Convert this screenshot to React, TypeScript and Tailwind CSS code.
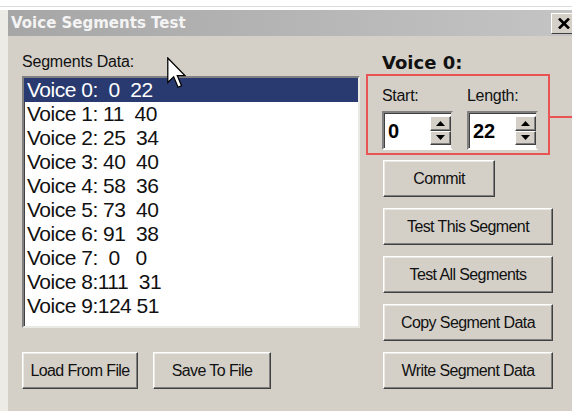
import React from "react";

const rows: string[] = [
  "Voice 0:  0  22",
  "Voice 1: 11  40",
  "Voice 2: 25  34",
  "Voice 3: 40  40",
  "Voice 4: 58  36",
  "Voice 5: 73  40",
  "Voice 6: 91  38",
  "Voice 7:  0   0",
  "Voice 8:111  31",
  "Voice 9:124 51",
];

const sans = { fontFamily: '"Liberation Sans", Arial, sans-serif' };
const dejavu = { fontFamily: '"DejaVu Sans", Verdana, sans-serif' };

function Button({ label, w }: { label: string; w: string }) {
  return (
    <button
      className={`${w} h-[37px] bg-[#d4d0c8] border border-t-white border-l-white border-b-[#404040] border-r-[#404040] shadow-[inset_-1px_-1px_0_#808080,inset_1px_1px_0_#ebe9e3] text-[16px] tracking-[-0.6px] text-[#111] flex items-center justify-center`}
      style={sans}
    >
      {label}
    </button>
  );
}

function SpinArrow({ up }: { up: boolean }) {
  return (
    <div className="flex-1 bg-[#d4d0c8] border border-t-white border-l-white border-b-[#404040] border-r-[#404040] shadow-[inset_-1px_-1px_0_#808080] flex items-center justify-center">
      <svg width="9" height="5" viewBox="0 0 9 5">
        {up ? <polygon points="0,5 9,5 4.5,0" fill="#000" /> : <polygon points="0,0 9,0 4.5,5" fill="#000" />}
      </svg>
    </div>
  );
}

function SpinBox({ value }: { value: string }) {
  return (
    <div className="w-[71px] h-[39px] bg-white border-2 border-t-[#808080] border-l-[#808080] border-b-white border-r-[#d4d0c8] shadow-[inset_1px_1px_0_#404040] flex items-center">
      <span className="flex-1 pl-[4px] text-[20px] font-bold text-black leading-none" style={sans}>
        {value}
      </span>
      <div className="w-[21px] h-[29px] flex flex-col self-center">
        <SpinArrow up />
        <SpinArrow up={false} />
      </div>
    </div>
  );
}

function Cursor() {
  return (
    <svg className="absolute left-[167px] top-[57px]" width="19" height="32" viewBox="0 0 12 20">
      <polygon
        points="0.5,0.5 0.5,16 4.2,12.4 7,19 9.2,18 6.5,11.6 11.3,11.6"
        fill="#fff"
        stroke="#000"
        strokeWidth="0.8"
        strokeLinejoin="miter"
      />
    </svg>
  );
}

export default function App() {
  return (
    <div className="w-[572px] h-[411px] overflow-hidden relative bg-[#ecebe6]">
      <div className="h-[10px] bg-white flex flex-col">
        <div className="h-[6px]" />
        <div className="h-[1px] bg-[#dcdcdc]" />
      </div>
      <div className="ml-[8px] w-[600px] h-[401px] flex flex-col bg-[#d4d0c8]">
        {/* title bar */}
        <div className="h-[26px] bg-gradient-to-r from-[#a6a6a6] to-[#c6c6c6] flex items-center relative">
          <span className="pl-[3px] text-[15px] font-bold text-[#f4f4f4]" style={dejavu}>
            Voice Segments Test
          </span>
          <div className="absolute left-[543px] top-[3px] w-[26px] h-[21px] bg-[#d4d0c8] border border-t-white border-l-white border-b-[#404040] border-r-[#404040] flex items-center justify-center">
            <svg width="12" height="11" viewBox="0 0 12 11">
              <path d="M1 0.5 L11 10.5 M11 0.5 L1 10.5" stroke="#000" strokeWidth="2.6" />
            </svg>
          </div>
        </div>

        {/* body */}
        <div className="flex pt-[15px] pl-[14px]">
          {/* left column */}
          <div className="w-[338px] flex flex-col">
            <div className="h-[22px] leading-[22px] text-[16px] tracking-[-0.2px] text-[#111]" style={sans}>
              Segments Data:
            </div>
            <div className="mt-[3px] h-[252px] bg-white border-2 border-t-[#808080] border-l-[#808080] border-b-[#ebe9e3] border-r-[#ebe9e3] shadow-[inset_1px_1px_0_#404040] flex flex-col">
              {rows.map((text, i) => (
                <div
                  key={text}
                  className={`h-[24px] leading-[24px] pl-[3px] text-[21px] tracking-[-0.5px] whitespace-pre ${
                    i === 0 ? "bg-[#283a70] text-white" : "text-[#111]"
                  }`}
                  style={sans}
                >
                  {text}
                </div>
              ))}
            </div>
            <div className="mt-[24px] flex gap-[15px]">
              <Button label="Load From File" w="w-[116px]" />
              <Button label="Save To File" w="w-[118px]" />
            </div>
          </div>

          {/* right column */}
          <div className="ml-[6px] flex flex-col">
            <div className="h-[23px] pl-[16px] flex items-center text-[18px] font-bold text-[#111]" style={dejavu}>
              Voice 0:
            </div>
            <div className="flex">
              <div className="w-[184px] h-[81px] border-2 border-[#e85454] flex pl-[14px] pt-[10px] gap-[14px]">
                <div className="flex flex-col">
                  <div className="h-[20px] leading-[20px] text-[16px] tracking-[-0.3px] text-[#111]" style={sans}>
                    Start:
                  </div>
                  <div className="mt-[5px]">
                    <SpinBox value="0" />
                  </div>
                </div>
                <div className="flex flex-col">
                  <div className="h-[20px] leading-[20px] text-[16px] tracking-[-0.3px] text-[#111]" style={sans}>
                    Length:
                  </div>
                  <div className="mt-[5px]">
                    <SpinBox value="22" />
                  </div>
                </div>
              </div>
              <div className="w-[40px] h-[2px] mt-[42px] bg-[#e85454]" />
            </div>
            <div className="pl-[17px] flex flex-col">
              <div className="mt-[5px]">
                <Button label="Commit" w="w-[112px]" />
              </div>
              <div className="mt-[11px]">
                <Button label="Test This Segment" w="w-[170px]" />
              </div>
              <div className="mt-[11px]">
                <Button label="Test All Segments" w="w-[170px]" />
              </div>
              <div className="mt-[11px]">
                <Button label="Copy Segment Data" w="w-[170px]" />
              </div>
              <div className="mt-[11px]">
                <Button label="Write Segment Data" w="w-[170px]" />
              </div>
            </div>
          </div>
        </div>
      </div>
      <Cursor />
    </div>
  );
}
